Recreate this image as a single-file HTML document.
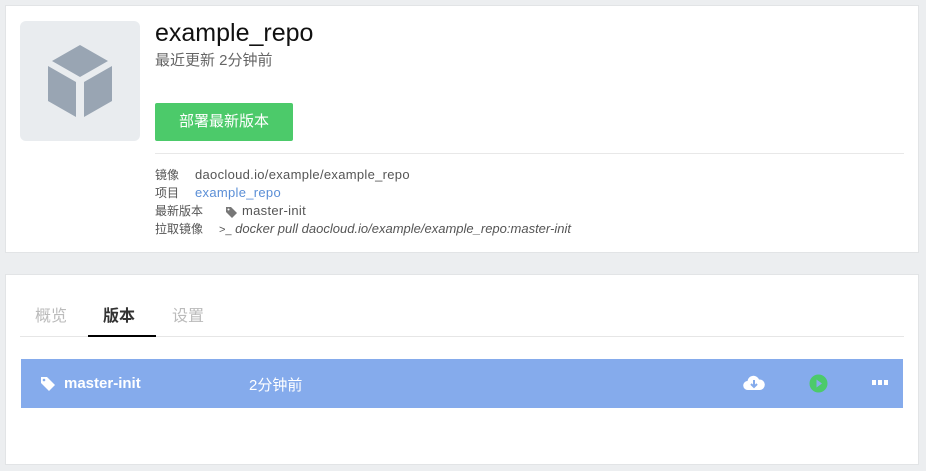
<!DOCTYPE html>
<html><head><meta charset="utf-8"><style>
*{margin:0;padding:0;box-sizing:border-box}
body{width:926px;height:471px;background:#eceef0;font-family:"Liberation Sans","Noto Sans CJK SC",sans-serif;position:relative;overflow:hidden}
.card{position:absolute;background:#fff;border:1px solid #e2e4e6}
.abs{position:absolute;white-space:nowrap}
.meta{font-size:12px;color:#555;line-height:18px}
.v{font-size:13px;letter-spacing:0.3px}
</style></head><body>
<div class="card" style="left:5px;top:5px;width:914px;height:248px"></div>
<div class="abs" style="left:20px;top:21px;width:120px;height:120px;background:#e9ecef;border-radius:6px">
<svg width="120" height="120" viewBox="0 0 120 120" style="position:absolute;left:0;top:0">
<polygon points="60,24 88,40 60,56 32,40" fill="#99a5b3"/>
<polygon points="28,45 56,61 56,96 28,80" fill="#99a5b3"/>
<polygon points="92,45 64,61 64,96 92,80" fill="#99a5b3"/>
</svg></div>
<div class="abs" style="left:155px;top:19px;font-size:25px;color:#111">example_repo</div>
<div class="abs" style="left:155px;top:49px;font-size:15px;color:#666">最近更新 2分钟前</div>
<div class="abs" style="left:155px;top:103px;width:138px;height:38px;background:#4cca6a;border-radius:2px;color:#fff;font-size:15px;line-height:38px;text-align:center">部署最新版本</div>
<div class="abs" style="left:155px;top:153px;width:749px;height:1px;background:#e8e8e8"></div>
<div class="abs meta" style="left:155px;top:166px">镜像</div>
<div class="abs meta v" style="left:195px;top:166px">daocloud.io/example/example_repo</div>
<div class="abs meta" style="left:155px;top:184px">项目</div>
<div class="abs meta v" style="left:195px;top:184px;color:#5a8ed6">example_repo</div>
<div class="abs meta" style="left:155px;top:202px">最新版本</div>
<svg class="abs" style="left:225px;top:206px" width="13" height="12" viewBox="0 0 13 12"><path d="M1 1h5l6 6-5 5-6-6z" fill="#777"/><circle cx="3.5" cy="3.5" r="1" fill="#fff"/></svg>
<div class="abs meta v" style="left:242px;top:202px">master-init</div>
<div class="abs meta" style="left:155px;top:220px">拉取镜像</div>
<div class="abs meta v" style="left:219px;top:220px;letter-spacing:0"><span style="font-size:11px">&gt;_</span> <i>docker pull daocloud.io/example/example_repo:master-init</i></div>

<div class="card" style="left:5px;top:274px;width:914px;height:191px"></div>
<div class="abs" style="left:35px;top:302px;font-size:16px;color:#bbb">概览</div>
<div class="abs" style="left:103px;top:302px;font-size:16px;color:#333;font-weight:bold">版本</div>
<div class="abs" style="left:172px;top:302px;font-size:16px;color:#bbb">设置</div>
<div class="abs" style="left:20px;top:336px;width:884px;height:1px;background:#e6e6e6"></div>
<div class="abs" style="left:88px;top:335px;width:68px;height:2px;background:#000"></div>
<div class="abs" style="left:21px;top:359px;width:882px;height:49px;background:#85abec"></div>
<svg class="abs" style="left:40px;top:376px" width="16" height="16" viewBox="0 0 16 16"><path d="M1 1h6l8 8-6 6-8-8z" fill="#fff"/><circle cx="4" cy="4" r="1.3" fill="#85abec"/></svg>
<div class="abs" style="left:64px;top:375px;font-size:15px;color:#fff;font-weight:bold">master-init</div>
<div class="abs" style="left:249px;top:374px;font-size:15px;color:#fff">2分钟前</div>
<svg class="abs" style="left:743px;top:374px" width="22" height="18" viewBox="0 0 22 18"><path d="M5 16a4.5 4.5 0 0 1-.5-9A6 6 0 0 1 16 5.5a4.5 4.5 0 0 1 1 10.5z" fill="#fff"/><path d="M11 6v7M8 10l3 3 3-3" stroke="#85abec" stroke-width="2" fill="none"/></svg>
<svg class="abs" style="left:809px;top:374px" width="19" height="19" viewBox="0 0 19 19"><circle cx="9.5" cy="9.5" r="9" fill="#4cca6a"/><path d="M7.5 5.5v8l5.5-4z" fill="#85abec"/></svg>
<svg class="abs" style="left:872px;top:380px" width="16" height="6" viewBox="0 0 16 6"><rect x="0" y="0" width="4" height="5" fill="#fff"/><rect x="6" y="0" width="4" height="5" fill="#fff"/><rect x="12" y="0" width="4" height="5" fill="#fff"/></svg>
</body></html>
